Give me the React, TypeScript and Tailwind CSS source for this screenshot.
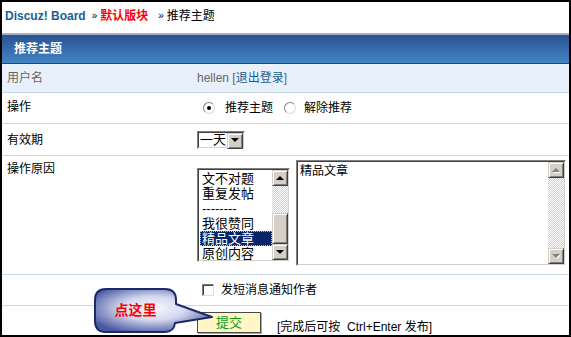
const font = "font-['Liberation_Sans','Noto_Sans_CJK_SC',sans-serif]";

function Arrow({ up, grey }: { up?: boolean; grey?: boolean }) {
  return (
    <svg width="8" height="5" viewBox="0 0 8 5">
      {grey && <polygon points={up ? "1,5 5,1 9,5" : "1,1 9,1 5,5"} fill="#ffffff" />}
      <polygon points={up ? "0,4 4,0 8,4" : "0,0 8,0 4,4"} fill={grey ? "#808080" : "#000000"} />
    </svg>
  );
}

function WinBtn({ up, grey, className = "" }: { up?: boolean; grey?: boolean; className?: string }) {
  return (
    <div
      className={`w-[16px] h-[16px] shrink-0 bg-[#d4d0c8] border border-t-[#d4d0c8] border-l-[#d4d0c8] border-r-[#404040] border-b-[#404040] shadow-[inset_1px_1px_0_#ffffff,inset_-1px_-1px_0_#808080] flex items-center justify-center ${className}`}
    >
      <Arrow up={up} grey={grey} />
    </div>
  );
}

const track = "bg-[repeating-conic-gradient(#d4d0c8_0%_25%,#ffffff_0%_50%)] bg-[length:2px_2px]";

function Inset({ className = "", children }: { className?: string; children: React.ReactNode }) {
  return (
    <div className={`border border-t-[#808080] border-l-[#808080] border-r-white border-b-white ${className}`}>
      <div className="w-full h-full border border-t-[#404040] border-l-[#404040] border-r-[#d4d0c8] border-b-[#d4d0c8] bg-white flex">
        {children}
      </div>
    </div>
  );
}

function Radio({ checked }: { checked?: boolean }) {
  return (
    <div className="w-[12px] h-[12px] rounded-full border border-t-[#808080] border-l-[#808080] border-r-[#e0ddd6] border-b-[#e0ddd6] bg-white flex items-center justify-center">
      {checked && <div className="w-[4px] h-[4px] rounded-full bg-black" />}
    </div>
  );
}

export default function App() {
  const reasons = ["文不对题", "重复发帖", "--------", "我很赞同", "精品文章", "原创内容"];
  return (
    <div className={`relative w-[571px] h-[337px] bg-white border-2 border-black overflow-hidden text-[12px] text-black ${font}`}>
      {/* breadcrumb */}
      <div className="h-[31px] flex items-start pt-[6px] pl-[3px] leading-[16px]">
        <span className="font-bold text-[#1a5e90]">Discuz! Board</span>
        <span className="ml-[6px] text-[10px]">»</span>
        <span className="ml-[3px] font-bold text-[#ff0000]">默认版块</span>
        <span className="ml-[10px] text-[10px]">»</span>
        <span className="ml-[3px]">推荐主题</span>
      </div>
      <div className="h-[2px] bg-[#a7afc0]" />

      {/* header */}
      <div className="h-[29px] bg-linear-to-b from-[#2b5394] to-[#4384c3] border-b border-[#1d4a87] flex items-center pl-3 text-white font-bold">
        推荐主题
      </div>

      {/* 用户名 */}
      <div className="h-[29px] bg-[#e8f1fb] border-b border-[#c8d7e9] flex items-center">
        <div className="w-[195px] pl-[5px] text-[#666666]">用户名</div>
        <div className="text-[#666666]">
          hellen [<span className="text-[#1a5e90]">退出登录</span>]
        </div>
      </div>

      {/* 操作 */}
      <div className="h-[31px] border-b border-[#c8d7e9] flex items-center">
        <div className="w-[195px] pl-[5px] -mt-[3px]">操作</div>
        <div className="flex items-center pl-[6px]">
          <Radio checked />
          <span className="ml-[10px]">推荐主题</span>
          <div className="ml-[11px]">
            <Radio />
          </div>
          <span className="ml-[8px]">解除推荐</span>
        </div>
      </div>

      {/* 有效期 */}
      <div className="h-[32px] border-b border-[#c8d7e9] flex items-center">
        <div className="w-[195px] pl-[5px]">有效期</div>
        <Inset className="w-[48px] h-[18px]">
          <div className="flex-1 text-[13px] leading-[14px] pl-[1px]">一天</div>
          <WinBtn />
        </Inset>
      </div>

      {/* 操作原因 */}
      <div className="h-[119px] border-b border-[#c8d7e9] flex items-start">
        <div className="w-[195px] pl-[5px] pt-[5px] leading-[16px]">操作原因</div>
        <Inset className="w-[93px] h-[94px] mt-[12px]">
          <div className="flex-1 pt-[1px] pl-[1px]">
            {reasons.map((r) => (
              <div
                key={r}
                className={`h-[15px] text-[13px] leading-[15px] pl-[2px] ${r === "精品文章" ? "bg-[#0a246a] text-white outline-1 outline-dotted outline-[#c0c0c0] -outline-offset-1" : ""}`}
              >
                {r}
              </div>
            ))}
          </div>
          <div className="w-[16px] flex flex-col">
            <WinBtn up />
            <div className={`h-[27px] ${track}`} />
            <div className="h-[31px] bg-[#d4d0c8] border border-t-[#d4d0c8] border-l-[#d4d0c8] border-r-[#404040] border-b-[#404040] shadow-[inset_1px_1px_0_#ffffff,inset_-1px_-1px_0_#808080]" />
            <div className={`flex-1 ${track}`} />
            <WinBtn />
          </div>
        </Inset>
        <Inset className="w-[270px] h-[106px] mt-[4px] ml-[6px]">
          <div className="flex-1 pl-[2px] pt-[1px] leading-[16px]">精品文章</div>
          <div className="w-[16px] flex flex-col">
            <WinBtn up grey />
            <div className={`flex-1 ${track}`} />
            <WinBtn grey />
          </div>
        </Inset>
      </div>

      {/* 通知 */}
      <div className="h-[31px] border-b border-[#c8d7e9] flex items-center">
        <div className="w-[200px]" />
        <div className="w-[12px] h-[12px] border border-t-[#808080] border-l-[#808080] border-r-[#e0ddd6] border-b-[#e0ddd6] bg-white shadow-[inset_1px_1px_0_#404040]" />
        <span className="ml-[7px]">发短消息通知作者</span>
      </div>

      {/* 提交 */}
      <div className="flex items-start pt-[6px]">
        <div className="w-[195px]" />
        <button className="w-[64px] h-[21px] bg-[#fff7c6] border border-[#4a4a4a] shadow-[1px_1px_0_#e89a3c] text-[#119a11] text-[13px] leading-[19px]">
          提交
        </button>
        <span className="ml-[16px] mt-[8px] leading-[14px]">[完成后可按&nbsp; Ctrl+Enter 发布]</span>
      </div>

      {/* callout */}
      <div className="absolute left-[86px] top-[282px] w-[130px] h-[52px]">
        <svg width="130" height="52" viewBox="0 0 130 52" className="absolute left-0 top-0">
          <defs>
            <radialGradient id="bub" cx="50%" cy="45%" r="60%">
              <stop offset="0%" stopColor="#f6f7fd" />
              <stop offset="45%" stopColor="#d5d9ef" />
              <stop offset="100%" stopColor="#4a5aa2" />
            </radialGradient>
          </defs>
          <path
            d="M18,5 H77 Q88,5 88,16 V20 L124,33 L87,39 Q86,48 77,48 H18 Q7,48 7,37 V16 Q7,5 18,5 Z"
            fill="url(#bub)"
            stroke="#1c2a6c"
            strokeWidth="2"
            strokeLinejoin="round"
          />
        </svg>
        <div className="absolute left-[7px] top-[5px] w-[81px] h-[43px] flex items-center justify-center">
          <span className="text-[#ff0000] font-bold text-[14px] -mt-[1px]">点这里</span>
        </div>
      </div>
    </div>
  );
}
